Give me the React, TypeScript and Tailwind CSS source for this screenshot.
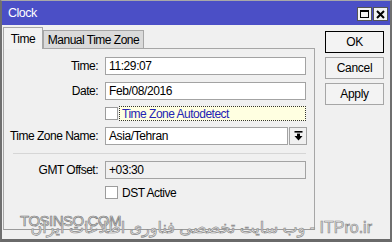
import React from 'react';

const font = { fontFamily: '"Liberation Sans", "DejaVu Sans", Arial, sans-serif' };

function Field({ label, children }: { label: string; children: React.ReactNode }) {
  return (
    <div className="flex items-center">
      <div className="w-[95px] pr-[1px] text-right text-[12px] tracking-[-0.5px] text-black leading-none">{label}</div>
      <div className="ml-[6px] flex items-center">{children}</div>
    </div>
  );
}

function Input({ value, w = 'w-[201px]', readOnly = false }: { value: string; w?: string; readOnly?: boolean }) {
  return (
    <div
      className={`${w} h-[18px] border border-[#a3a3a3] ${readOnly ? 'bg-[#f0f0f0]' : 'bg-white'} pl-[3px] flex items-center text-[12px] tracking-[-0.4px] text-black leading-none`}
    >
      {value}
    </div>
  );
}

function Checkbox() {
  return <div className="w-[13px] h-[13px] border border-[#9c9c9c] bg-white shrink-0" />;
}

function DialogButton({ text, primary = false }: { text: string; primary?: boolean }) {
  return (
    <div
      className={`h-[22px] w-[59px] flex items-center justify-center text-[12px] tracking-[-0.3px] text-black bg-[#f3f3f3] border ${
        primary ? 'border-black' : 'border-[#a6a6a6]'
      }`}
    >
      {text}
    </div>
  );
}

export default function App() {
  return (
    <div
      className="relative w-[392px] h-[242px] overflow-hidden bg-[#f0f0f0] border-t border-t-[#a8a8a8] border-x-2 border-x-[#6f6f6f] border-b-[3px] border-b-[#6a6a6a]"
      style={font}
    >
      {/* title bar */}
      <div className="h-[24px] bg-[#4b4fc6] flex items-center pl-[6px] pr-[2px]">
        <span className="text-white text-[12.5px] tracking-[-0.5px] leading-none">Clock</span>
        <div className="ml-auto flex gap-[1px] mt-[2px]">
          <div className="w-[15px] h-[14px] bg-[#f2f2f2] border border-[#555] flex items-center justify-center">
            <div className="w-[9px] h-[8px] border border-black border-t-2" />
          </div>
          <div className="w-[15px] h-[14px] bg-[#f2f2f2] border border-[#555] flex items-center justify-center">
            <svg width="9" height="9" viewBox="0 0 9 9">
              <path d="M1 1 L8 8 M8 1 L1 8" stroke="black" strokeWidth="2" />
            </svg>
          </div>
        </div>
      </div>

      {/* body */}
      <div className="flex pl-[1px]">
        <div className="w-[312px] pt-[2px]">
          {/* tabs */}
          <div className="flex items-end h-[21px]">
            <div className="relative z-10 w-[40px] h-[22px] -mb-px border border-b-0 border-[#a6a6a6] bg-[#f2f2f2] flex items-center justify-center text-[12px] tracking-[-0.4px] text-black">
              Time
            </div>
            <div className="w-[101px] h-[18px] border border-b-0 border-[#a6a6a6] bg-[#dadada] flex items-center justify-center text-[12px] tracking-[-0.5px] text-black">
              Manual Time Zone
            </div>
          </div>

          {/* panel */}
          <div className="h-[182px] border border-[#a6a6a6] border-b-[#9a9a9a] pt-[8px]">
            <Field label="Time:">
              <Input value="11:29:07" />
            </Field>
            <div className="mt-[7px]">
              <Field label="Date:">
                <Input value="Feb/08/2016" />
              </Field>
            </div>
            <div className="mt-[6px] flex items-center pl-[101px]">
              <Checkbox />
              <div className="ml-[1px] w-[187px] h-[15px] border border-dotted border-[#333] bg-[#ffffe1] pl-[2px] flex items-center text-[12px] tracking-[-0.5px] text-[#2323b4] leading-none">
                Time Zone Autodetect
              </div>
            </div>
            <div className="mt-[6px]">
              <Field label="Time Zone Name:">
                <Input value="Asia/Tehran" w="w-[183px]" />
                <div className="ml-[1px] w-[18px] h-[18px] border border-[#a3a3a3] bg-[#f0f0f0] flex items-center justify-center">
                  <svg width="9" height="10" viewBox="0 0 9 10">
                    <rect x="0.5" y="0" width="8" height="1.6" fill="black" />
                    <rect x="3" y="2.6" width="3" height="2.6" fill="black" />
                    <path d="M0.5 5 L8.5 5 L4.5 9.5 Z" fill="black" />
                  </svg>
                </div>
              </Field>
            </div>
            <div className="mt-[8px] ml-[9px] w-[293px] h-px bg-[#d6d6d6]" />
            <div className="mt-[7px]">
              <Field label="GMT Offset:">
                <Input value="+03:30" readOnly />
              </Field>
            </div>
            <div className="mt-[7px] flex items-center pl-[101px]">
              <Checkbox />
              <span className="ml-[4px] text-[12px] tracking-[-0.5px] text-black leading-none">DST Active</span>
            </div>
          </div>
        </div>

        {/* buttons */}
        <div className="ml-[10px] pt-[6px] flex flex-col gap-[4px]">
          <DialogButton text="OK" primary />
          <DialogButton text="Cancel" />
          <DialogButton text="Apply" />
        </div>
      </div>

      {/* watermark */}
      <div className="absolute left-[18px] top-[212px] text-[15px] tracking-[-0.5px] leading-none text-[#ececec] [-webkit-text-stroke:0.7px_#7a7a7a]">
        TOSINSO.COM
      </div>
      <div
        dir="rtl"
        className="absolute right-[18px] top-[219px] whitespace-nowrap text-[16px] leading-none text-[#ececec] [-webkit-text-stroke:0.7px_#8a8a8a]"
      >
        ITPro.ir - وب سایت تخصصی فناوری اطلاعات ایران
      </div>
    </div>
  );
}
